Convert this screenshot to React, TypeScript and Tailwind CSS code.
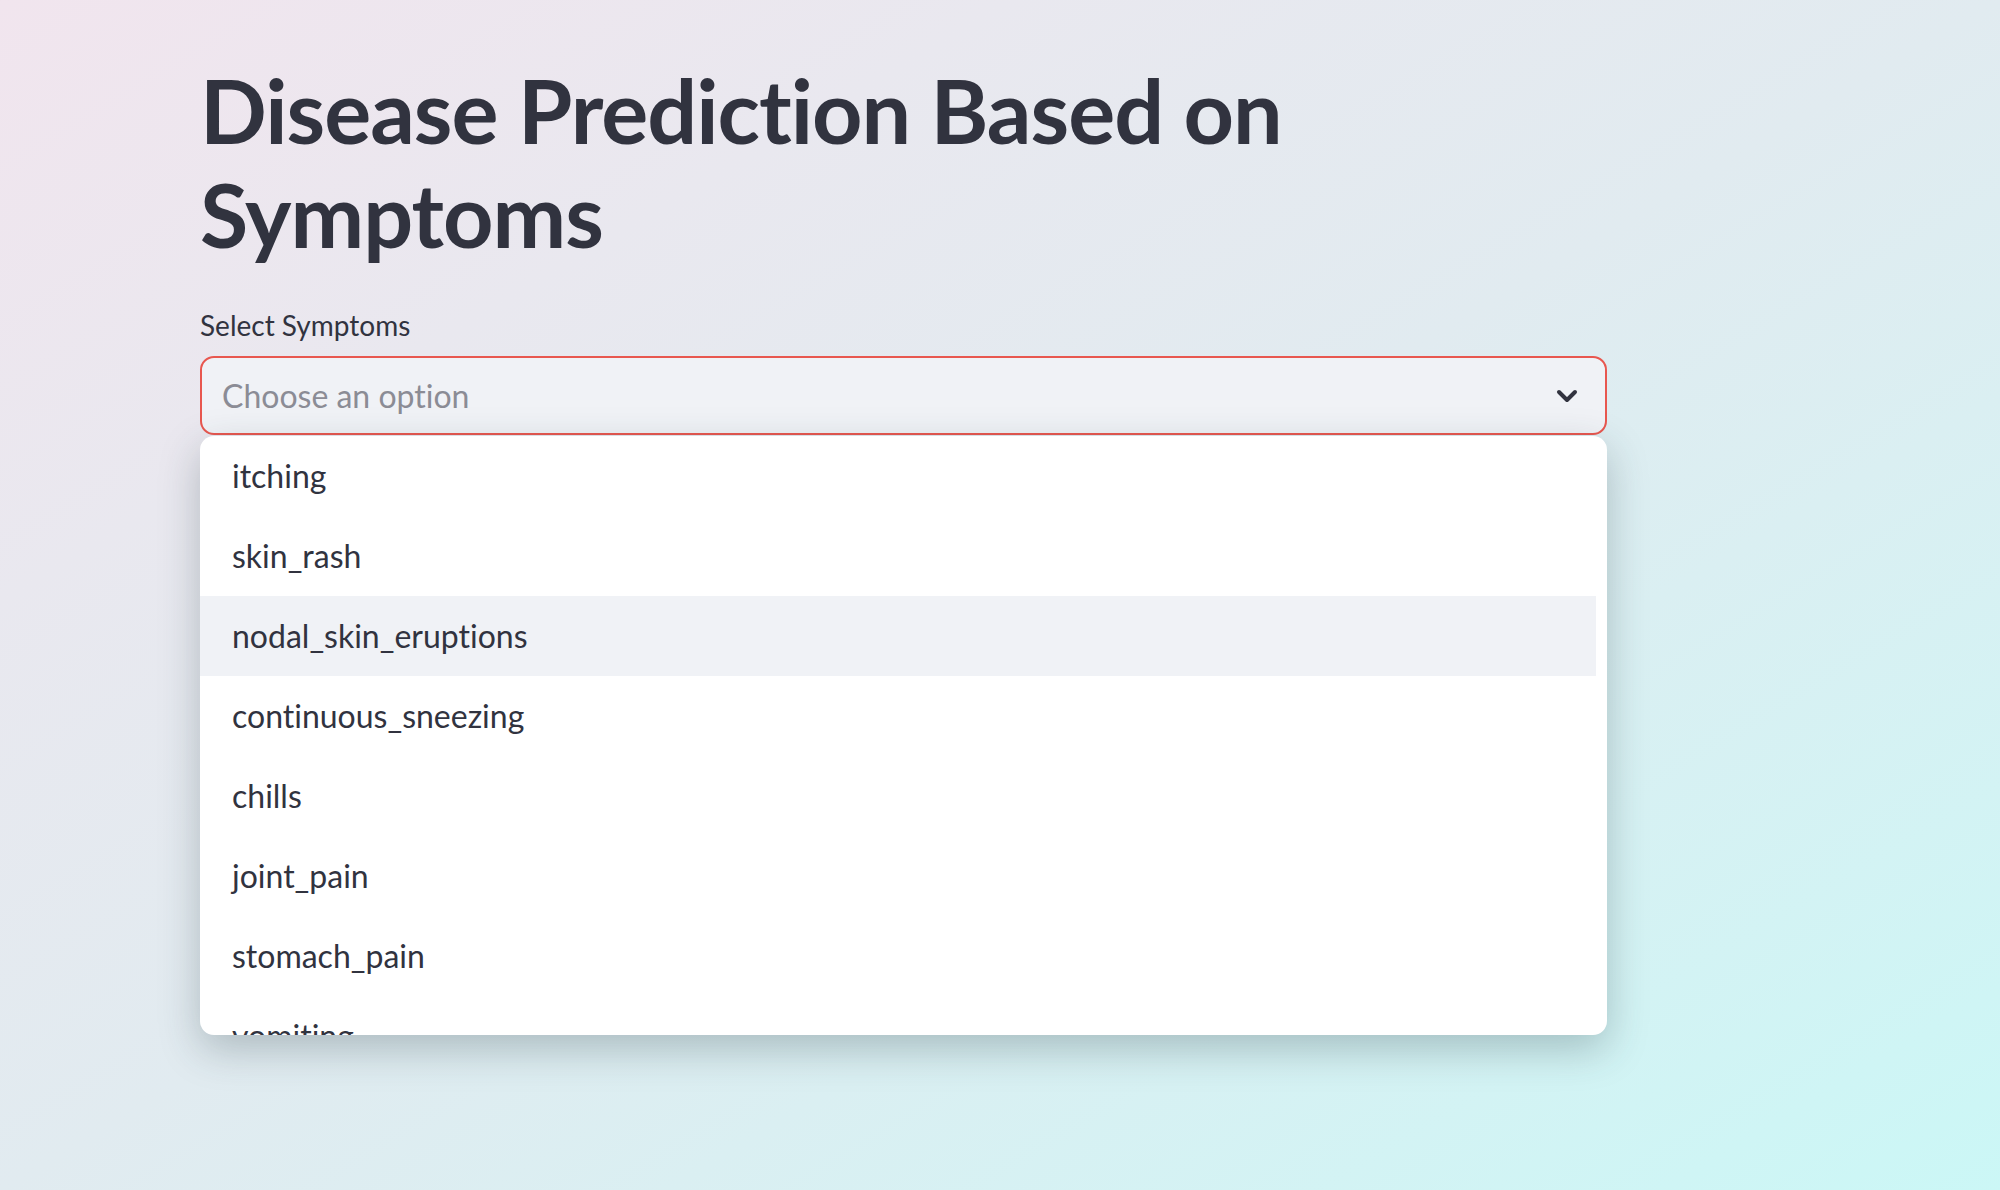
import { ChevronDown } from "lucide-react";

const symptoms = [
  "itching",
  "skin_rash",
  "nodal_skin_eruptions",
  "continuous_sneezing",
  "chills",
  "joint_pain",
  "stomach_pain",
  "vomiting",
];

const font = { fontFamily: '"Source Sans Pro", Lato, "Noto Sans", sans-serif' };

export default function App() {
  const hovered = 2;

  return (
    <div
      className="min-h-[1190px] w-full bg-gradient-to-br from-[#f1e5ee] via-[#e1ebf0] to-[#cbf7f6] text-[#31333f] [font-variant-ligatures:none]"
      style={font}
    >
      <div className="w-[1407px] pl-[200px] pt-[58px] box-content">
        <h1 className="text-[88px] font-bold leading-[104px] tracking-[-1px]">
          Disease Prediction Based on
          <br />
          Symptoms
        </h1>

        <label className="mt-[39px] block text-[28px] leading-[40px]">Select Symptoms</label>

        <div className="relative mt-[11px]">
          <div className="flex h-[79px] items-center justify-between rounded-[14px] border-2 border-[#e8574f] bg-[#f0f2f6] pl-[20px] pr-[22px]">
            <span className="text-[32px] text-[#8b8c95]">Choose an option</span>
            <ChevronDown className="h-[32px] w-[32px] text-[#31333f]" strokeWidth={3} />
          </div>

          <div className="absolute left-0 right-0 top-[80px] h-[599px] overflow-hidden rounded-[14px] bg-white shadow-[0_14px_40px_rgba(40,60,70,0.28)]">
            <ul className="pr-[11px]">
              {symptoms.map((s, i) => (
                <li
                  key={s}
                  className={
                    "flex h-[80px] items-center pl-[32px] text-[32px] " +
                    (i === hovered ? "bg-[#f0f2f6]" : "")
                  }
                >
                  {s}
                </li>
              ))}
            </ul>
          </div>
        </div>
      </div>
    </div>
  );
}
